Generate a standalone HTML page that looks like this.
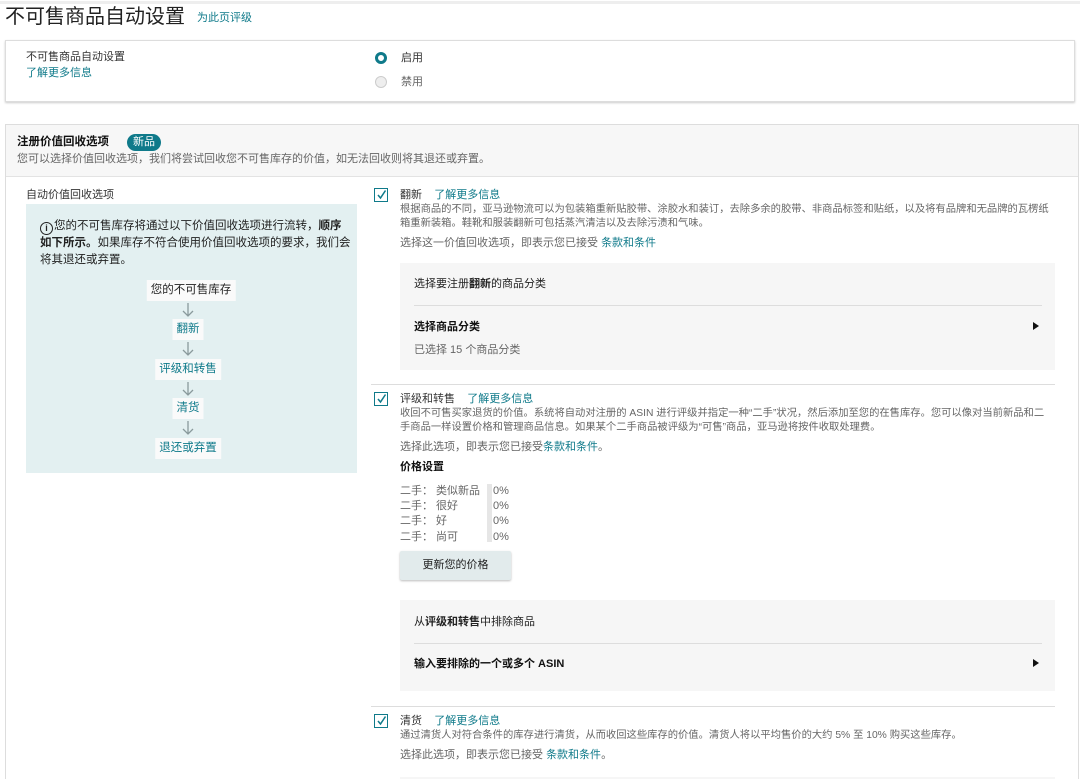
<!DOCTYPE html>
<html><head><meta charset="utf-8"><style>
*{margin:0;padding:0;box-sizing:border-box}
html,body{width:1080px;height:779px;overflow:hidden}
body{background:#fff;font-family:"Liberation Sans","Noto Sans CJK SC",sans-serif;font-size:11px;color:#333;position:relative}
.a{position:absolute;white-space:nowrap;line-height:14px}
.l{color:#0f7a8a}
.g{color:#666}
.b{font-weight:bold;color:#111}
.cb{position:absolute;width:14px;height:14px;border:1.5px solid #0f7a8a;background:#fff}
.cb svg{position:absolute;left:1px;top:0}
.pn{position:absolute;background:#f6f6f6}
.fl{position:absolute;background:#fafafa;padding:0 4px;height:21px;line-height:21px;font-size:11.5px;transform:translateX(-50%)}
.ar{position:absolute;width:14px;height:18px}
.tri{position:absolute;width:0;height:0;border-left:6px solid #111;border-top:4.5px solid transparent;border-bottom:4.5px solid transparent}
</style></head><body>
<div style="position:absolute;left:0;top:1px;width:1080px;height:3px;background:#eee"></div>
<div class="a" style="left:5px;top:5px;font-size:20px;line-height:25px;color:#222">不可售商品自动设置</div>
<div class="a l" style="left:197px;top:11px">为此页评级</div>

<div style="position:absolute;left:5px;top:40px;width:1070px;height:62px;border:1px solid #ddd;box-shadow:0 1px 2px #ccc"></div>
<div class="a" style="left:26px;top:50px">不可售商品自动设置</div>
<div class="a l" style="left:26px;top:66px">了解更多信息</div>
<div style="position:absolute;left:375px;top:52px;width:12px;height:12px;border-radius:50%;border:3.5px solid #0f7a8a;background:#fff"></div>
<div class="a" style="left:401px;top:51px">启用</div>
<div style="position:absolute;left:375px;top:76px;width:12px;height:12px;border-radius:50%;border:1px solid #ccc;background:#eee"></div>
<div class="a g" style="left:401px;top:75px">禁用</div>

<div style="position:absolute;left:5px;top:124px;width:1074px;height:655px;border:1px solid #ddd;border-bottom:none"></div>
<div style="position:absolute;left:6px;top:125px;width:1072px;height:52px;background:#f7f7f7;border-bottom:1px solid #e3e3e3"></div>
<div class="a b" style="left:17px;top:135px;font-size:11.5px">注册价值回收选项</div>
<div class="a" style="left:127px;top:134px;width:34px;height:17px;border-radius:9px;background:#0f7a8a;color:#fff;text-align:center;line-height:17px">新品</div>
<div class="a g" style="left:17px;top:152px">您可以选择价值回收选项，我们将尝试回收您不可售库存的价值，如无法回收则将其退还或弃置。</div>

<div class="a" style="left:26px;top:188px">自动价值回收选项</div>
<div style="position:absolute;left:26px;top:204px;width:331px;height:269px;background:#e3f0f1"></div>
<div style="position:absolute;left:40px;top:218px;width:312px;font-size:11.5px;line-height:16.5px;color:#222"><span style="display:inline-block;width:13px;height:13px;border:1.3px solid #222;border-radius:50%;font-size:9px;line-height:11px;text-align:center;font-weight:bold;vertical-align:-2px;margin-right:1px">i</span>您的不可售库存将通过以下价值回收选项进行流转，<b>顺序如下所示。</b>如果库存不符合使用价值回收选项的要求，我们会将其退还或弃置。</div>
<div class="fl" style="left:191px;top:280px;color:#222">您的不可售库存</div>
<div class="fl l" style="left:188px;top:319px">翻新</div>
<div class="fl l" style="left:188px;top:359px">评级和转售</div>
<div class="fl l" style="left:188px;top:398px">清货</div>
<div class="fl l" style="left:188px;top:438px">退还或弃置</div>
<svg class="ar" style="left:181px;top:301px" viewBox="0 0 14 18"><path d="M7 2V15M2 10L7 15L12 10" stroke="#8a9a9c" stroke-width="1.3" fill="none"/></svg>
<svg class="ar" style="left:181px;top:340px" viewBox="0 0 14 18"><path d="M7 2V15M2 10L7 15L12 10" stroke="#8a9a9c" stroke-width="1.3" fill="none"/></svg>
<svg class="ar" style="left:181px;top:380px" viewBox="0 0 14 18"><path d="M7 2V15M2 10L7 15L12 10" stroke="#8a9a9c" stroke-width="1.3" fill="none"/></svg>
<svg class="ar" style="left:181px;top:419px" viewBox="0 0 14 18"><path d="M7 2V15M2 10L7 15L12 10" stroke="#8a9a9c" stroke-width="1.3" fill="none"/></svg>

<div class="cb" style="left:374px;top:188px"><svg width="11" height="11"><path d="M2 6 L4.5 9 L9.5 1.5" stroke="#0f7a8a" stroke-width="1.5" fill="none"/></svg></div>
<div class="a" style="left:400px;top:188px">翻新&nbsp;&nbsp;&nbsp;&nbsp;<span class="l">了解更多信息</span></div>
<div class="a g" style="left:400px;top:203px;white-space:normal;width:655px;font-size:10.3px">根据商品的不同，亚马逊物流可以为包装箱重新贴胶带、涂胶水和装订，去除多余的胶带、非商品标签和贴纸，以及将有品牌和无品牌的瓦楞纸箱重新装箱。鞋靴和服装翻新可包括蒸汽清洁以及去除污渍和气味。</div>
<div class="a g" style="left:400px;top:236px">选择这一价值回收选项，即表示您已接受 <span class="l">条款和条件</span></div>
<div class="pn" style="left:400px;top:263px;width:655px;height:107px"></div>
<div class="a" style="left:414px;top:277px;color:#222">选择要注册<b>翻新</b>的商品分类</div>
<div style="position:absolute;left:414px;top:305px;width:628px;height:1px;background:#ddd"></div>
<div class="a b" style="left:414px;top:320px">选择商品分类</div>
<div class="tri" style="left:1033px;top:322px"></div>
<div class="a g" style="left:414px;top:343px">已选择 15 个商品分类</div>

<div style="position:absolute;left:371px;top:384px;width:684px;height:1px;background:#ddd"></div>
<div class="cb" style="left:374px;top:392px"><svg width="11" height="11"><path d="M2 6 L4.5 9 L9.5 1.5" stroke="#0f7a8a" stroke-width="1.5" fill="none"/></svg></div>
<div class="a" style="left:400px;top:392px">评级和转售&nbsp;&nbsp;&nbsp;&nbsp;<span class="l">了解更多信息</span></div>
<div class="a g" style="left:400px;top:407px;white-space:normal;width:652px;font-size:10.3px">收回不可售买家退货的价值。系统将自动对注册的 ASIN 进行评级并指定一种“二手”状况，然后添加至您的在售库存。您可以像对当前新品和二手商品一样设置价格和管理商品信息。如果某个二手商品被评级为“可售”商品，亚马逊将按件收取处理费。</div>
<div class="a g" style="left:400px;top:440px">选择此选项，即表示您已接受<span class="l">条款和条件</span>。</div>
<div class="a b" style="left:400px;top:460px">价格设置</div>
<div class="a g" style="left:400px;top:484px">二手：&nbsp;类似新品</div>
<div class="a g" style="left:400px;top:499px">二手：&nbsp;很好</div>
<div class="a g" style="left:400px;top:514px">二手：&nbsp;好</div>
<div class="a g" style="left:400px;top:530px">二手：&nbsp;尚可</div>
<div style="position:absolute;left:487px;top:484px;width:5px;height:58px;background:#e6e6e6"></div>
<div class="a g" style="left:493px;top:484px">0%</div>
<div class="a g" style="left:493px;top:499px">0%</div>
<div class="a g" style="left:493px;top:514px">0%</div>
<div class="a g" style="left:493px;top:530px">0%</div>
<div style="position:absolute;left:400px;top:551px;width:111px;height:29px;background:#e2ebec;border-radius:2px;box-shadow:0 1px 2px #bbb;text-align:center;line-height:29px;color:#222">更新您的价格</div>
<div class="pn" style="left:400px;top:600px;width:655px;height:91px"></div>
<div class="a" style="left:414px;top:615px;color:#222">从<b>评级和转售</b>中排除商品</div>
<div style="position:absolute;left:414px;top:643px;width:628px;height:1px;background:#ddd"></div>
<div class="a b" style="left:414px;top:657px">输入要排除的一个或多个 ASIN</div>
<div class="tri" style="left:1033px;top:659px"></div>

<div style="position:absolute;left:371px;top:706px;width:684px;height:1px;background:#ddd"></div>
<div class="cb" style="left:374px;top:714px"><svg width="11" height="11"><path d="M2 6 L4.5 9 L9.5 1.5" stroke="#0f7a8a" stroke-width="1.5" fill="none"/></svg></div>
<div class="a" style="left:400px;top:714px">清货&nbsp;&nbsp;&nbsp;&nbsp;<span class="l">了解更多信息</span></div>
<div class="a g" style="left:400px;top:729px;font-size:10.3px">通过清货人对符合条件的库存进行清货，从而收回这些库存的价值。清货人将以平均售价的大约 5% 至 10% 购买这些库存。</div>
<div class="a g" style="left:400px;top:748px">选择此选项，即表示您已接受 <span class="l">条款和条件</span>。</div>
<div class="pn" style="left:400px;top:777px;width:655px;height:2px"></div>
</body></html>
